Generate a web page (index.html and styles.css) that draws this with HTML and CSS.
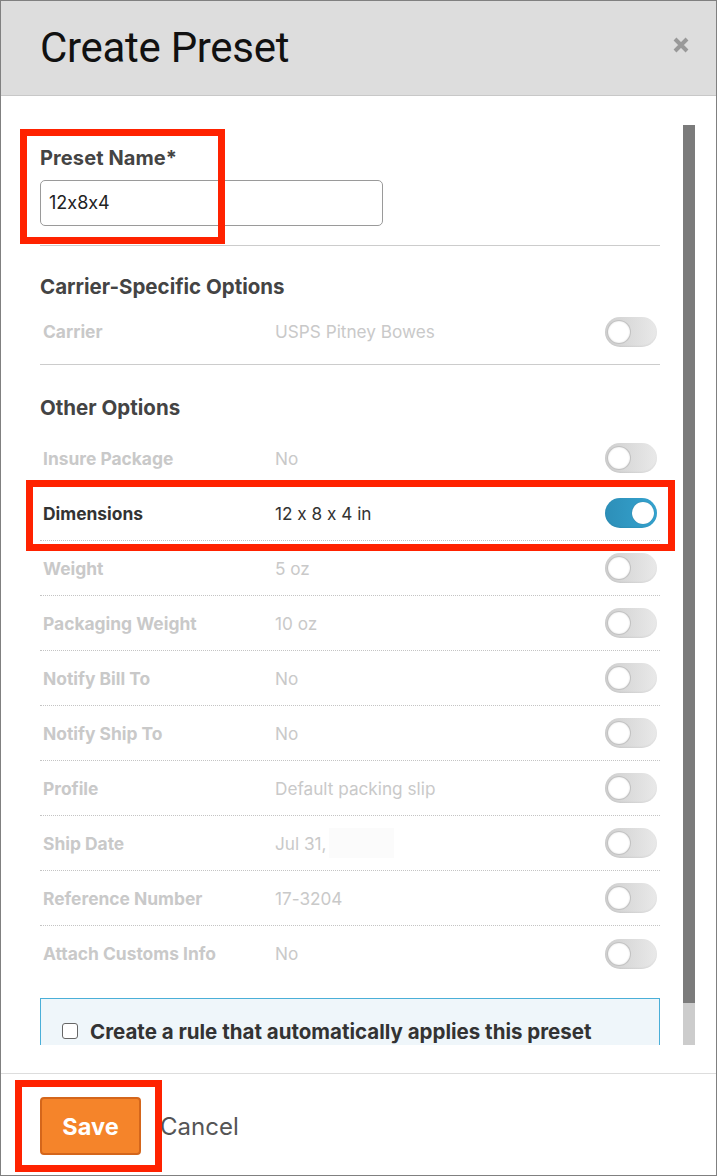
FILE: index.html
```html
<!DOCTYPE html>
<html lang="en">
<head>
    <meta charset="utf-8">
    <title>Create Preset</title>
    <link rel="stylesheet" href="styles.css">
</head>
<body>
    <div class="modal">
        <div class="modal-header">
            <h1>Create Preset</h1>
            <svg class="close" width="16" height="16" viewBox="0 0 16 16"><path d="M2 2L14 14M14 2L2 14" stroke="#999" stroke-width="4" stroke-linecap="butt"/></svg>
        </div>

        <div class="modal-body">
            <div class="scroll">
                <div class="content">
                    <label class="field-label">Preset Name*</label>
                    <div class="input">12x8x4</div>
                    <hr class="solid">

                    <h2>Carrier-Specific Options</h2>
                    <div class="row last">
                        <span class="name">Carrier</span>
                        <span class="value">USPS Pitney Bowes</span>
                        <span class="toggle"></span>
                    </div>
                    <hr class="solid">

                    <h2 class="other">Other Options</h2>
                    <div class="rows">
                        <div class="row"><span class="name">Insure Package</span><span class="value">No</span><span class="toggle"></span></div>
                        <div class="row on"><span class="name">Dimensions</span><span class="value">12 x 8 x 4 in</span><span class="toggle"></span></div>
                        <div class="row"><span class="name">Weight</span><span class="value">5 oz</span><span class="toggle"></span></div>
                        <div class="row"><span class="name">Packaging Weight</span><span class="value">10 oz</span><span class="toggle"></span></div>
                        <div class="row"><span class="name">Notify Bill To</span><span class="value">No</span><span class="toggle"></span></div>
                        <div class="row"><span class="name">Notify Ship To</span><span class="value">No</span><span class="toggle"></span></div>
                        <div class="row"><span class="name">Profile</span><span class="value">Default packing slip</span><span class="toggle"></span></div>
                        <div class="row"><span class="name">Ship Date</span><span class="value">Jul 31,<i class="blank"></i></span><span class="toggle"></span></div>
                        <div class="row"><span class="name">Reference Number</span><span class="value">17-3204</span><span class="toggle"></span></div>
                        <div class="row last"><span class="name">Attach Customs Info</span><span class="value">No</span><span class="toggle"></span></div>
                    </div>

                    <div class="rule">
                        <span class="check"></span>
                        <span>Create a rule that automatically applies this preset</span>
                    </div>
                </div>
                <div class="scrollbar"><div class="thumb"></div></div>
            </div>
        </div>

        <div class="modal-footer">
            <button class="btn-save">Save</button>
            <span class="cancel">Cancel</span>
        </div>

        <div class="mark mark-name"></div>
        <div class="mark mark-dim"></div>
        <div class="mark mark-save"></div>
    </div>
</body>
</html>
```

FILE: styles.css
```css
*{margin:0;padding:0;box-sizing:border-box;}
body{font-family:"Inter","Liberation Sans",sans-serif;font-feature-settings:"calt" 0;color:#444;background:#fff;}

.modal{position:relative;width:717px;height:1176px;border:1px solid #808080;display:flex;flex-direction:column;background:#fff;}

.modal-header{height:95px;flex:none;background:#dddddd;border-bottom:1px solid #c8c8c8;display:flex;align-items:center;justify-content:space-between;padding:0 27px 0 39px;}
.modal-header h1{font-family:"Roboto","Liberation Sans",sans-serif;font-weight:400;font-size:42px;color:#111;letter-spacing:-0.3px;margin-top:-2px;}
.close{display:block;margin-top:-6px;}

.modal-body{flex:1;padding:29px 20px 28px 39px;min-height:0;}
.scroll{height:920px;display:flex;gap:23px;}
.content{width:620px;overflow:hidden;padding-top:21px;}

.scrollbar{width:12px;background:#cccccc;}
.thumb{height:878px;background:#7b7b7b;}

.field-label{display:block;font-size:20px;font-weight:700;line-height:24px;color:#444;letter-spacing:0.1px;}
.input{width:343px;height:46px;margin-top:10px;border:1px solid #9a9a9a;border-radius:5px;padding:0 8px;font-size:18px;line-height:44px;color:#222;}

hr.solid{border:0;border-top:1px solid #cccccc;margin-top:19px;}

h2{font-size:20.5px;font-weight:700;line-height:24px;color:#444;margin-top:29px;margin-bottom:5px;}
h2.other{margin-top:31px;margin-bottom:11px;}

.row{height:55px;display:flex;align-items:center;padding:0 3px;border-bottom:1px dotted #c4c4c4;}
.row.last{border-bottom:0;}
.row + hr.solid{margin-top:5px;}
.name{width:232px;font-size:17.4px;font-weight:700;color:#c9c9c9;}
.value{flex:1;font-size:17.2px;color:#c9c9c9;display:flex;align-items:center;}
.row.on .name,.row.on .value{color:#333;}
.blank{display:inline-block;width:65px;height:30px;background:#fbfbfb;margin-left:2px;}

.toggle{position:relative;width:52px;height:30px;border-radius:15px;background:linear-gradient(90deg,#cfcfcf,#e9e9e9);box-shadow:inset 0 -1px 2px rgba(0,0,0,0.06);}
.toggle::after{content:"";position:absolute;top:4px;left:3px;width:22px;height:22px;border-radius:50%;background:#fff;box-shadow:0 0 0 1px #c2c2c2,inset 0 0 2px rgba(0,0,0,0.15);}
.row.on .toggle{background:linear-gradient(90deg,#2d8fb8,#35a3cf);}
.row.on .toggle::after{left:27px;box-shadow:0 0 1px rgba(0,0,0,0.3);}

.rule{margin-top:17px;height:80px;background:#eff6fa;border:1px solid #4aafd8;padding:21px 21px;display:flex;align-items:flex-start;gap:12px;font-size:20.5px;font-weight:700;color:#333;line-height:24px;}
.check{width:16px;height:16px;flex:none;margin-top:3px;border:1px solid #666;border-radius:3px;background:#fff;}

.modal-footer{flex:none;height:102px;border-top:1px solid #dddddd;display:flex;align-items:center;padding:0 39px 0 39px;gap:19px;}
.btn-save{width:101px;height:58px;margin-top:3px;background:#f5842a;border:2px solid #d4661b;border-radius:4px;color:#fff;font-family:"Inter","Liberation Sans",sans-serif;font-size:23.5px;font-weight:700;}
.cancel{font-size:24px;color:#555;margin-top:3px;}

.mark{position:absolute;border:7px solid #ff2200;}
.mark-name{left:19px;top:128px;width:205px;height:115px;}
.mark-dim{left:25px;top:479px;width:649px;height:71px;}
.mark-save{left:14px;top:1079px;width:147px;height:92px;}
```
